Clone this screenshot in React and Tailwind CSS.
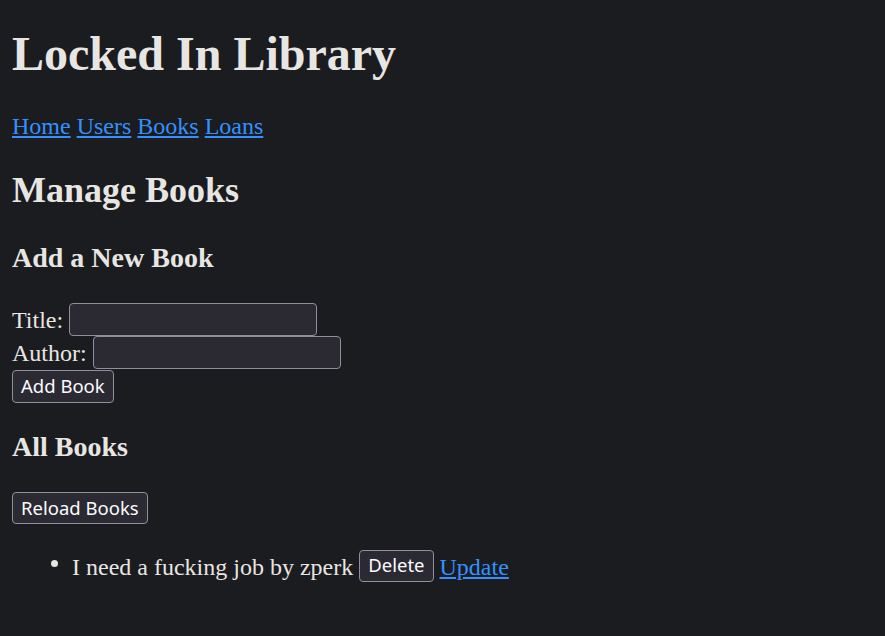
export default function App() {
  const serif = { fontFamily: "'Liberation Serif', 'Times New Roman', serif" };
  const books = [{ id: 1, title: "I need a fucking job", author: "zperk" }];

  return (
    <div className="min-h-[636px] bg-[#1b1c1f] text-[#e8e6e3] px-[12px] pt-[26px] text-[24px]" style={serif}>
      <h1 className="text-[48px] font-bold leading-[55px]">Locked In Library</h1>

      <nav className="mt-[31px] leading-[28px]">
        <a href="#" className="text-[#3391ff] underline">Home</a>{" "}
        <a href="#" className="text-[#3391ff] underline">Users</a>{" "}
        <a href="#" className="text-[#3391ff] underline">Books</a>{" "}
        <a href="#" className="text-[#3391ff] underline">Loans</a>
      </nav>

      <h2 className="text-[36px] font-bold mt-[30px] leading-[41px]">Manage Books</h2>

      <h3 className="text-[28px] font-bold mt-[31px] leading-[32px]">Add a New Book</h3>

      <form className="mt-[29px]" onSubmit={(e) => e.preventDefault()}>
        <div className="flex items-center h-[33px]">
          <span className="leading-[28px]">Title:</span>
          <Field className="ml-[6px]" />
        </div>
        <div className="flex items-center h-[33px]">
          <span className="leading-[28px]">Author:</span>
          <Field className="ml-[6px]" />
        </div>
        <Btn className="block h-[33px] mt-[1px]">Add Book</Btn>
      </form>

      <h3 className="text-[28px] font-bold mt-[28px] leading-[32px]">All Books</h3>

      <div className="mt-[29px] flex">
        <Btn className="h-[32px]">Reload Books</Btn>
      </div>

      <ul className="list-disc pl-[60px] mt-[25px]">
        {books.map((b) => (
          <li key={b.id} className="leading-[28px]">
            <span className="inline-flex items-center align-top h-[33px]">
              <span className="pt-[2px]">
                {b.title} by {b.author}
              </span>
              <Btn className="ml-[6px] h-[32px]">Delete</Btn>
              <a href="#" className="ml-[6px] pt-[2px] text-[#3391ff] underline">Update</a>
            </span>
          </li>
        ))}
      </ul>
    </div>
  );
}

function Field({ className = "" }) {
  return (
    <input
      type="text"
      className={`w-[248px] h-[33px] rounded-[4px] border border-[#8f8f9d] bg-[#2b2a33] text-[#fbfbfe] px-[4px] text-[20px] outline-none ${className}`}
    />
  );
}

function Btn({ children, className = "" }) {
  return (
    <button
      type="button"
      className={`px-[8px] rounded-[4px] border border-[#8f8f9d] bg-[#2b2a33] text-[#fbfbfe] text-[18.5px] leading-none ${className}`}
      style={{ fontFamily: "'Noto Sans', 'Open Sans', sans-serif" }}
    >
      {children}
    </button>
  );
}
